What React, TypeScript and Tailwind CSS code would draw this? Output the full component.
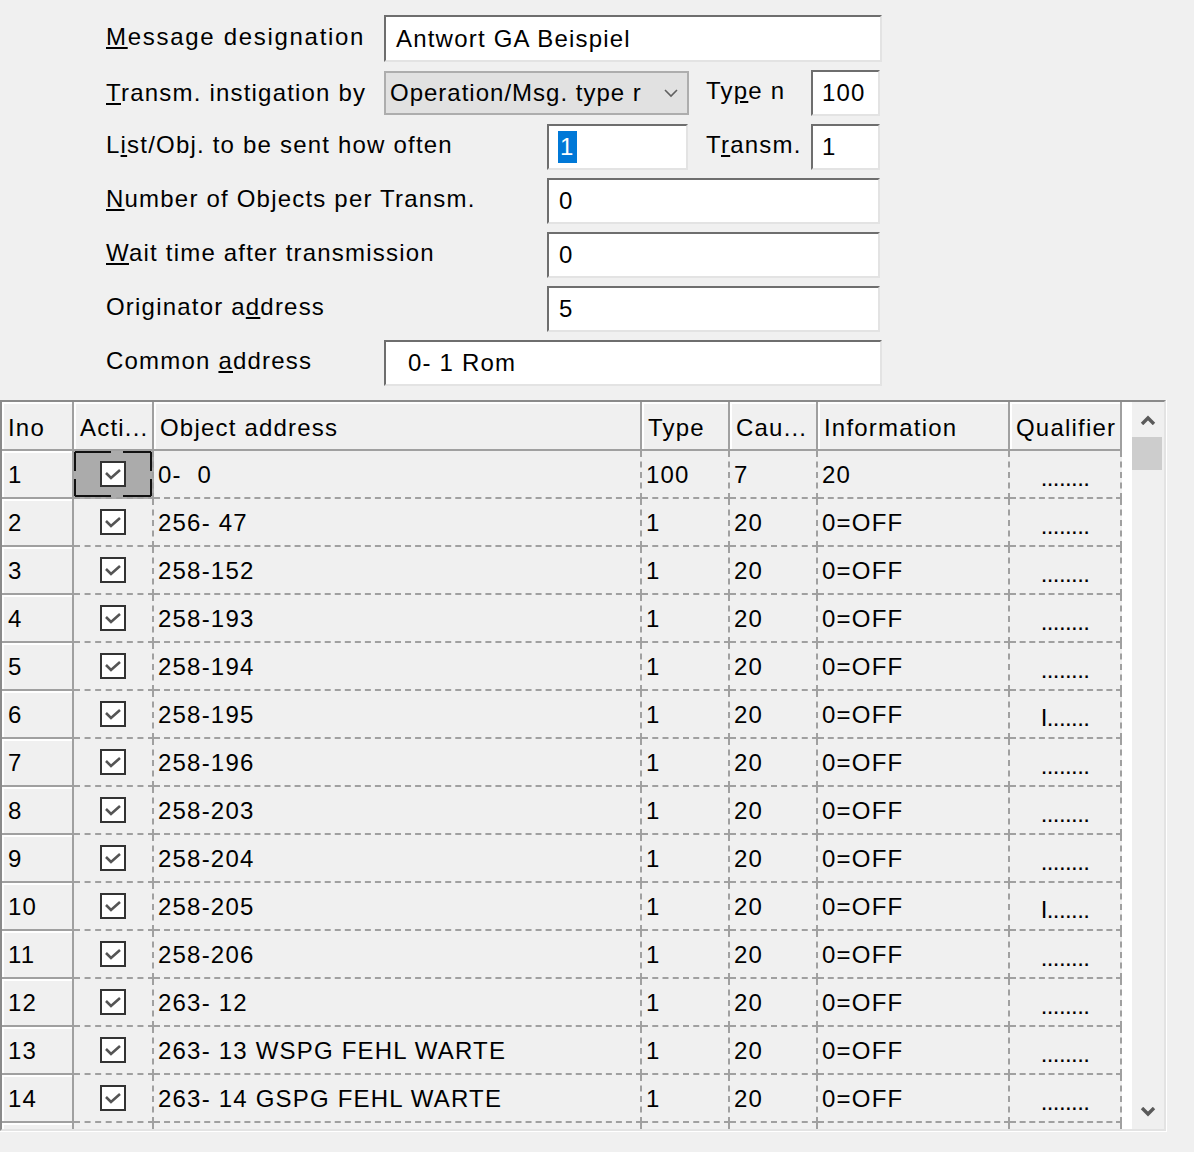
import React from "react";

const rows = [
    { ino: "1", addr: "0-  0", type: "100", cause: "7", info: "20", qual: "........" },
    { ino: "2", addr: "256- 47", type: "1", cause: "20", info: "0=OFF", qual: "........" },
    { ino: "3", addr: "258-152", type: "1", cause: "20", info: "0=OFF", qual: "........" },
    { ino: "4", addr: "258-193", type: "1", cause: "20", info: "0=OFF", qual: "........" },
    { ino: "5", addr: "258-194", type: "1", cause: "20", info: "0=OFF", qual: "........" },
    { ino: "6", addr: "258-195", type: "1", cause: "20", info: "0=OFF", qual: "I......." },
    { ino: "7", addr: "258-196", type: "1", cause: "20", info: "0=OFF", qual: "........" },
    { ino: "8", addr: "258-203", type: "1", cause: "20", info: "0=OFF", qual: "........" },
    { ino: "9", addr: "258-204", type: "1", cause: "20", info: "0=OFF", qual: "........" },
    { ino: "10", addr: "258-205", type: "1", cause: "20", info: "0=OFF", qual: "I......." },
    { ino: "11", addr: "258-206", type: "1", cause: "20", info: "0=OFF", qual: "........" },
    { ino: "12", addr: "263- 12", type: "1", cause: "20", info: "0=OFF", qual: "........" },
    { ino: "13", addr: "263- 13 WSPG FEHL WARTE", type: "1", cause: "20", info: "0=OFF", qual: "........" },
    { ino: "14", addr: "263- 14 GSPG FEHL WARTE", type: "1", cause: "20", info: "0=OFF", qual: "........" },
    { ino: "", addr: "", type: "", cause: "", info: "", qual: "" },
];

// sunken win32 edit box
const edit = "h-full bg-white border-2 border-t-[#6e6e6e] border-l-[#6e6e6e] border-b-[#e3e3e3] border-r-[#e3e3e3] flex items-center whitespace-pre overflow-hidden";

const hdr = "h-full flex items-center px-[6px] border-r-2 border-b-2 border-[#a0a0a0] shadow-[inset_2px_2px_0_#ffffff] whitespace-nowrap overflow-hidden";
const cell = "h-full flex items-center px-[4px] border-r-2 border-b-2 border-dashed border-[#a0a0a0] whitespace-pre overflow-hidden";

const CheckBox = () => (
    <div className="w-[26px] h-[26px] bg-white border-2 border-[#333333] flex items-center justify-center">
        <svg width="18" height="14" viewBox="0 0 18 14">
            <path d="M2 6 L7 11 L16 3" fill="none" stroke="#555555" strokeWidth="2.6" />
        </svg>
    </div>
);

const Chevron = ({ up }: { up?: boolean }) => (
    <svg width="16" height="10" viewBox="0 0 16 10">
        <path d={up ? "M2 9 L8 3 L14 9" : "M2 1 L8 7 L14 1"} fill="none" stroke="#5a5a5a" strokeWidth="3.4" />
    </svg>
);

export default function App() {
    return (
        <div className="w-[1194px] h-[1152px] bg-[#f0f0f0] text-black text-[24px] tracking-[1.2px] font-['Liberation_Sans',Arial,sans-serif] leading-none overflow-hidden">
            {/* Form */}
            <div className="pt-[15px] pl-[106px] flex flex-col gap-2">
                <div className="flex h-[47px] items-center">
                    <span className="w-[278px] -mt-[3px] tracking-[1.7px]"><u>M</u>essage designation</span>
                    <div className={`${edit} w-[498px] pl-[10px]`}>Antwort GA Beispiel</div>
                </div>
                <div className="flex h-[46px] items-center">
                    <span className="w-[278px]"><u>T</u>ransm. instigation by</span>
                    <div className="w-[305px] h-[44px] bg-[#e1e1e1] border-2 border-[#adadad] flex items-center pl-[4px] pr-[8px]">
                        <span className="flex-1 whitespace-nowrap tracking-[1px]">Operation/Msg. type r</span>
                        <svg width="16" height="10" viewBox="0 0 16 10">
                            <path d="M2 2 L8 8 L14 2" fill="none" stroke="#606060" strokeWidth="1.6" />
                        </svg>
                    </div>
                    <span className="w-[105px] ml-[17px] -mt-[4px]">Ty<u>p</u>e n</span>
                    <div className={`${edit} w-[69px] pl-[9px]`}>100</div>
                </div>
                <div className="flex h-[46px] items-center">
                    <span className="w-[441px] -mt-[4px]">L<u>i</u>st/Obj. to be sent how often</span>
                    <div className={`${edit} w-[141px] pl-[9px]`}>
                        <span className="bg-[#0078d7] text-white h-[32px] flex items-center px-[2px]">1</span>
                    </div>
                    <span className="w-[105px] ml-[18px] -mt-[4px]">T<u>r</u>ansm.</span>
                    <div className={`${edit} w-[69px] pl-[9px]`}>1</div>
                </div>
                <div className="flex h-[46px] items-center">
                    <span className="w-[441px] -mt-[4px]"><u>N</u>umber of Objects per Transm.</span>
                    <div className={`${edit} w-[333px] pl-[10px]`}>0</div>
                </div>
                <div className="flex h-[46px] items-center">
                    <span className="w-[441px] -mt-[4px]"><u>W</u>ait time after transmission</span>
                    <div className={`${edit} w-[333px] pl-[10px]`}>0</div>
                </div>
                <div className="flex h-[46px] items-center">
                    <span className="w-[441px] -mt-[4px]">Originator a<u>d</u>dress</span>
                    <div className={`${edit} w-[333px] pl-[10px]`}>5</div>
                </div>
                <div className="flex h-[46px] items-center">
                    <span className="w-[278px] -mt-[4px]">Common <u>a</u>ddress</span>
                    <div className={`${edit} w-[498px] pl-[22px]`}>0- 1 Rom</div>
                </div>
            </div>

            {/* Grid */}
            <div className="mt-[14px] w-[1167px] border-r border-b border-white">
                <div className="border-2 border-t-[#8a8a8a] border-l-[#8a8a8a] border-r-[#e3e3e3] border-b-[#e3e3e3] flex">
                    <div className="w-[1120px]">
                        <div className="grid grid-cols-[72px_80px_488px_88px_88px_192px_112px] h-[49px] pt-[0px]">
                            <div className={`${hdr} pt-[4px]`}>Ino</div>
                            <div className={`${hdr} pt-[4px]`}>Acti...</div>
                            <div className={`${hdr} pt-[4px]`}>Object address</div>
                            <div className={`${hdr} pt-[4px]`}>Type</div>
                            <div className={`${hdr} pt-[4px]`}>Cau...</div>
                            <div className={`${hdr} pt-[4px]`}>Information</div>
                            <div className={`${hdr} pt-[4px]`}>Qualifier</div>
                        </div>
                        <div className="h-[678px] overflow-hidden">
                            {rows.map((r, i) => (
                                <div key={i} className="grid grid-cols-[72px_80px_488px_88px_88px_192px_112px] h-[48px]">
                                    <div className={`${hdr} pt-[2px]`}>{r.ino}</div>
                                    <div className={`${cell} justify-center relative ${i === 0 ? "bg-[#ababab]" : ""}`}>
                                        {r.addr !== "" && <CheckBox />}
                                        {i === 0 && (
                                            <svg className="absolute left-0 top-0" width="78" height="46" viewBox="0 0 78 46">
                                                <path d="M1 1 H37 M49 1 H77 M1 45 H37 M49 45 H77 M1 1 V20 M1 28 V45 M77 1 V20 M77 28 V45" fill="none" stroke="#111111" strokeWidth="2" />
                                            </svg>
                                        )}
                                    </div>
                                    <div className={`${cell} pt-[2px]`}>{r.addr}</div>
                                    <div className={`${cell} pt-[2px]`}>{r.type}</div>
                                    <div className={`${cell} pt-[2px]`}>{r.cause}</div>
                                    <div className={`${cell} pt-[2px]`}>{r.info}</div>
                                    <div className={`${cell} justify-center pt-[8px] tracking-[-0.6px]`}>{r.qual}</div>
                                </div>
                            ))}
                        </div>
                    </div>
                    <div className="w-[10px] bg-white" />
                    {/* scrollbar */}
                    <div className="w-[32px] bg-[#f0f0f0] flex flex-col">
                        <div className="h-[35px] flex items-center justify-center">
                            <Chevron up />
                        </div>
                        <div className="h-[33px] w-[30px] bg-[#cdcdcd]" />
                        <div className="flex-1" />
                        <div className="h-[35px] flex items-center justify-center">
                            <Chevron />
                        </div>
                    </div>
                </div>
            </div>
        </div>
    );
}
